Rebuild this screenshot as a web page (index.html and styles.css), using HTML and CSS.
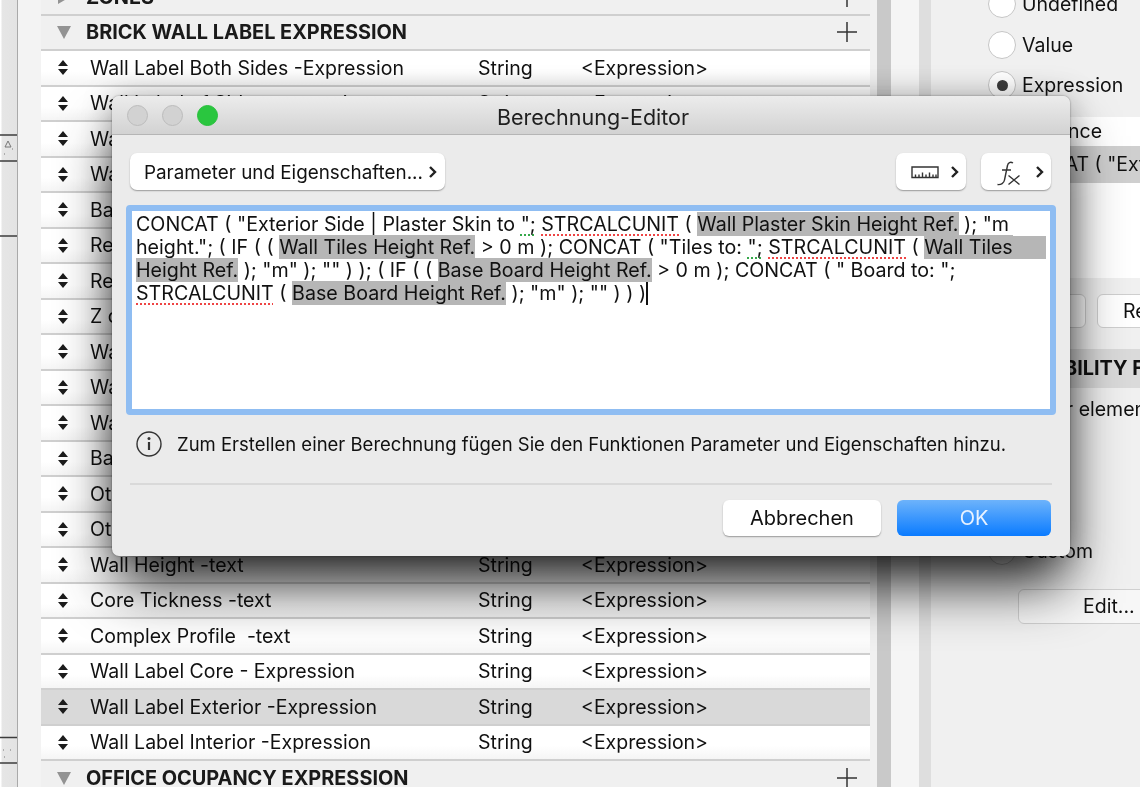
FILE: index.html
```html
<!DOCTYPE html>
<html lang="de">
<head>
<meta charset="utf-8">
<title>Berechnung-Editor</title>
<link rel="stylesheet" href="styles.css">
</head>
<body>
<div class="app">
  <div class="strip">
    <svg class="strip-marks" width="17" height="787" viewBox="0 0 17 787">
      <path d="M0 135H17M0 161H17M0 236H17M0 737.500H17M0 763H17" stroke="#3c3c3c" stroke-width="1.300" fill="none"/>
      <path d="M5 147l3-6 3 6z" stroke="#777" fill="none"/>
      <path d="M4 154h1M12 149h1M3 750h1M10 750h1M4 757h1" stroke="#777" fill="none"/>
    </svg>
  </div>
  <div class="gutter"></div>
  <div class="list">
    <div class="section"><svg class="tri" width="16" height="16" viewBox="0 0 16 16"><path d="M2 1l12 7-12 7z"/></svg><b>ZONES</b><svg class="plus" width="20" height="20" viewBox="0 0 20 20"><path d="M10 0V20M0 10H20"/></svg></div>
    <div class="section"><svg class="tri" width="16" height="16" viewBox="0 0 16 16"><path d="M1 2h14l-7 13z"/></svg><b>BRICK WALL LABEL EXPRESSION</b><svg class="plus" width="20" height="20" viewBox="0 0 20 20"><path d="M10 0V20M0 10H20"/></svg></div>
    <div class="row"><svg class="sort" width="12" height="15" viewBox="0 0 12 15"><path d="M6 0l5 6H1zM6 15L1 9h10z"/></svg><span>Wall Label Both Sides -Expression</span><span>String</span><span>&lt;Expression&gt;</span></div>
    <div class="row"><svg class="sort" width="12" height="15" viewBox="0 0 12 15"><path d="M6 0l5 6H1zM6 15L1 9h10z"/></svg><span>Wall Label of Sides expression</span><span>String</span><span>&lt;Expression&gt;</span></div>
    <div class="row"><svg class="sort" width="12" height="15" viewBox="0 0 12 15"><path d="M6 0l5 6H1zM6 15L1 9h10z"/></svg><span>Wall Plaster Skin Height Ref.</span><span>String</span><span>&lt;Expression&gt;</span></div>
    <div class="row"><svg class="sort" width="12" height="15" viewBox="0 0 12 15"><path d="M6 0l5 6H1zM6 15L1 9h10z"/></svg><span>Wall Tiles Height Ref.</span><span>String</span><span>&lt;Expression&gt;</span></div>
    <div class="row"><svg class="sort" width="12" height="15" viewBox="0 0 12 15"><path d="M6 0l5 6H1zM6 15L1 9h10z"/></svg><span>Base Board Height Ref.</span><span>String</span><span>&lt;Expression&gt;</span></div>
    <div class="row"><svg class="sort" width="12" height="15" viewBox="0 0 12 15"><path d="M6 0l5 6H1zM6 15L1 9h10z"/></svg><span>Ref. Level</span><span>String</span><span>&lt;Expression&gt;</span></div>
    <div class="row"><svg class="sort" width="12" height="15" viewBox="0 0 12 15"><path d="M6 0l5 6H1zM6 15L1 9h10z"/></svg><span>Ref. Height</span><span>String</span><span>&lt;Expression&gt;</span></div>
    <div class="row"><svg class="sort" width="12" height="15" viewBox="0 0 12 15"><path d="M6 0l5 6H1zM6 15L1 9h10z"/></svg><span>Z coordinate</span><span>String</span><span>&lt;Expression&gt;</span></div>
    <div class="row"><svg class="sort" width="12" height="15" viewBox="0 0 12 15"><path d="M6 0l5 6H1zM6 15L1 9h10z"/></svg><span>Wall Finish</span><span>String</span><span>&lt;Expression&gt;</span></div>
    <div class="row"><svg class="sort" width="12" height="15" viewBox="0 0 12 15"><path d="M6 0l5 6H1zM6 15L1 9h10z"/></svg><span>Wall Type</span><span>String</span><span>&lt;Expression&gt;</span></div>
    <div class="row"><svg class="sort" width="12" height="15" viewBox="0 0 12 15"><path d="M6 0l5 6H1zM6 15L1 9h10z"/></svg><span>Wall Length</span><span>String</span><span>&lt;Expression&gt;</span></div>
    <div class="row"><svg class="sort" width="12" height="15" viewBox="0 0 12 15"><path d="M6 0l5 6H1zM6 15L1 9h10z"/></svg><span>Base Board</span><span>String</span><span>&lt;Expression&gt;</span></div>
    <div class="row"><svg class="sort" width="12" height="15" viewBox="0 0 12 15"><path d="M6 0l5 6H1zM6 15L1 9h10z"/></svg><span>Other Side 1</span><span>String</span><span>&lt;Expression&gt;</span></div>
    <div class="row"><svg class="sort" width="12" height="15" viewBox="0 0 12 15"><path d="M6 0l5 6H1zM6 15L1 9h10z"/></svg><span>Other Side 2</span><span>String</span><span>&lt;Expression&gt;</span></div>
    <div class="row"><svg class="sort" width="12" height="15" viewBox="0 0 12 15"><path d="M6 0l5 6H1zM6 15L1 9h10z"/></svg><span>Wall Height -text</span><span>String</span><span>&lt;Expression&gt;</span></div>
    <div class="row"><svg class="sort" width="12" height="15" viewBox="0 0 12 15"><path d="M6 0l5 6H1zM6 15L1 9h10z"/></svg><span>Core Tickness -text</span><span>String</span><span>&lt;Expression&gt;</span></div>
    <div class="row"><svg class="sort" width="12" height="15" viewBox="0 0 12 15"><path d="M6 0l5 6H1zM6 15L1 9h10z"/></svg><span>Complex Profile&nbsp; -text</span><span>String</span><span>&lt;Expression&gt;</span></div>
    <div class="row"><svg class="sort" width="12" height="15" viewBox="0 0 12 15"><path d="M6 0l5 6H1zM6 15L1 9h10z"/></svg><span>Wall Label Core - Expression</span><span>String</span><span>&lt;Expression&gt;</span></div>
    <div class="row selected"><svg class="sort" width="12" height="15" viewBox="0 0 12 15"><path d="M6 0l5 6H1zM6 15L1 9h10z"/></svg><span>Wall Label Exterior -Expression</span><span>String</span><span>&lt;Expression&gt;</span></div>
    <div class="row"><svg class="sort" width="12" height="15" viewBox="0 0 12 15"><path d="M6 0l5 6H1zM6 15L1 9h10z"/></svg><span>Wall Label Interior -Expression</span><span>String</span><span>&lt;Expression&gt;</span></div>
    <div class="section"><svg class="tri" width="16" height="16" viewBox="0 0 16 16"><path d="M1 2h14l-7 13z"/></svg><b>OFFICE OCUPANCY EXPRESSION</b><svg class="plus" width="20" height="20" viewBox="0 0 20 20"><path d="M10 0V20M0 10H20"/></svg></div>
  </div>
  <div class="scroll-a"></div>
  <div class="scroll-b"></div>
  <div class="scroll-c"></div>
  <div class="scroll-d"></div>
  <div class="side">
    <div class="radio-row"><i class="radio"></i>Undefined</div>
    <div class="radio-row"><i class="radio"></i>Value</div>
    <div class="radio-row"><i class="radio on"></i>Expression</div>
    <div class="ref-label">Reference</div>
    <div class="ref-value">CONCAT ( "Exterior Side</div>
    <div class="ref-blank"></div>
    <div class="side-btns"><span class="side-btn first">Add</span><span class="side-btn">Remove</span></div>
    <div class="side-head">VISIBILITY FILTER</div>
    <div class="side-text">Filter elements</div>
    <div class="radio-row custom"><i class="radio"></i>Custom</div>
    <div class="edit-btn">Edit...</div>
  </div>
  <div class="dialog">
    <div class="titlebar">
      <div class="lights"><i class="light"></i><i class="light"></i><i class="light green"></i></div>
      <div class="title">Berechnung-Editor</div>
    </div>
    <div class="toolbar">
      <div class="tool tool-wide">Parameter und Eigenschaften...<svg class="chev" width="9" height="14" viewBox="0 0 9 14"><path d="M2 2l5 5-5 5"/></svg></div>
      <div class="tool-group">
        <div class="tool tool-icon"><svg width="28" height="14" viewBox="0 0 28 14"><path class="thin" d="M1 2h26v10.500H1zM4.500 12.500v-3M8 12.500v-3M11.500 12.500v-5M15 12.500v-3M18.500 12.500v-5M22 12.500v-3M25 12.500v-3"/></svg><svg class="chev" width="9" height="14" viewBox="0 0 9 14"><path d="M2 2l5 5-5 5"/></svg></div>
        <div class="tool tool-icon"><svg width="26" height="28" viewBox="0 0 26 28"><path class="thin" d="M17 5c-2.500-1.500-5-.5-5.500 2.500L8.500 22c-.5 3-3.500 5-7 4.500M6 12h9M12.500 17.500l11 9M23.500 17.500l-11 9"/></svg><svg class="chev" width="9" height="14" viewBox="0 0 9 14"><path d="M2 2l5 5-5 5"/></svg></div>
      </div>
    </div>
    <div class="editor">
      <div class="line">CONCAT ( "Exterior Side | Plaster Skin to <span class="ok">";</span> <span class="err">STRCALCUNIT</span> ( <mark>Wall Plaster Skin Height Ref.</mark> ); "m</div>
      <div class="line line-fill"><span>height."; ( IF ( ( <mark>Wall Tiles Height Ref.</mark> &gt; 0 m ); CONCAT ( "Tiles to: <span class="ok">";</span> <span class="err">STRCALCUNIT</span> ( <mark>Wall Tiles</mark></span><mark class="fill"></mark></div>
      <div class="line"><mark>Height Ref.</mark> ); "m" ); "" ) ); ( IF ( ( <mark>Base Board Height Ref.</mark> &gt; 0 m ); CONCAT ( " Board to: ";</div>
      <div class="line"><span class="err">STRCALCUNIT</span> ( <mark>Base Board Height Ref.</mark> ); "m" ); "" ) ) )<i class="caret"></i></div>
    </div>
    <div class="info">
      <svg width="26" height="26" viewBox="0 0 26 26"><circle class="thin" cx="13" cy="13" r="12"/><path d="M13 11v8" class="thick"/><circle cx="13" cy="7.500" r="1.500" fill="#333"/></svg>
      <span>Zum Erstellen einer Berechnung fügen Sie den Funktionen Parameter und Eigenschaften hinzu.</span>
    </div>
    <div class="sep"></div>
    <div class="actions">
      <div class="btn cancel">Abbrechen</div>
      <div class="btn ok-btn">OK</div>
    </div>
  </div>
</div>
</body>
</html>
```

FILE: styles.css
```css
* { box-sizing: border-box; }
html, body { margin: 0; height: 100%; overflow: hidden; }
body { font-family: Inter, "Noto Sans", sans-serif; color: #111; font-size: 19.500px; }

.app { position: relative; display: flex; width: 1140px; height: 787px; overflow: hidden; background: #f1f1f1; filter: blur(.35px); }

.strip { flex: none; width: 18px; background: linear-gradient(90deg, #fff 0, #fff 1px, #e6e6e6 2px, #e3e3e3 16px); border-right: 1px solid #a9a9a9; }
.strip-marks { display: block; }
.gutter { flex: none; width: 23px; background: #f3f3f3; }

.list { flex: none; width: 829px; margin-top: -20px; height: 850px; }
.section { display: flex; align-items: center; height: 35.500px; background: #f0f0f0; border-bottom: 2px solid #cfcfcf; padding: 0 13px 0 15px; }
.section b { flex: 1; margin-left: 14px; font-size: 19.900px; font-weight: 700; color: #1a1a1a; white-space: nowrap; }
.tri path { fill: #939393; }
.plus path { fill: none; stroke: #333; stroke-width: 1.500; }

.row { display: grid; grid-template-columns: 49px 388px 103px 1fr; align-items: center; height: 35.500px; background: linear-gradient(#fff 60%, #f5f5f5); border-bottom: 2px solid #cfcfcf; white-space: nowrap; }
.row.selected { background: #d9d9d9; }
.sort { justify-self: start; margin-left: 16px; }
.sort path { fill: #1c1c1c; }

.scroll-a { flex: none; width: 7px; background: #f1f1f1; }
.scroll-b { flex: none; width: 14px; background: #c9c9c9; }
.scroll-c { flex: none; width: 28px; background: #f5f5f5; }
.scroll-d { flex: none; width: 12px; background: #dedede; }

.side { flex: none; width: 209px; margin-top: -16px; background: #f0f0f0; }
.radio-row { display: flex; align-items: center; gap: 6px; height: 40.500px; padding-left: 57px; white-space: nowrap; }
.radio { flex: none; display: flex; align-items: center; justify-content: center; width: 28px; height: 28px; border-radius: 50%; background: #fff; border: 1.500px solid #c6c6c6; }
.radio.on::before { content: ""; width: 11px; height: 11px; border-radius: 50%; background: #3d3d3d; }
.ref-label { height: 29px; margin-top: 11px; padding-left: 77px; background: #fff; line-height: 28px; white-space: nowrap; }
.ref-value { height: 37px; padding-left: 76px; background: #cfcfcf; line-height: 37px; white-space: nowrap; overflow: hidden; }
.ref-blank { height: 95px; background: #fff; }
.side-btns { display: flex; gap: 11px; height: 34px; margin-top: 16px; padding-left: 70px; white-space: nowrap; }
.side-btn { flex: none; width: 100px; padding-left: 25px; line-height: 32px; background: #fff; border: 1px solid #cfcfcf; border-radius: 6px; }
.side-btn.first { width: 85px; }
.side-head { height: 39px; margin-top: 21px; padding-left: 94px; background: #dadada; line-height: 39px; font-size: 19.900px; font-weight: 700; white-space: nowrap; }
.side-text { margin-top: 9px; padding-left: 96px; line-height: 24px; white-space: nowrap; }
.custom { margin-top: 110px; }
.edit-btn { width: 140px; height: 35px; margin-top: 18px; margin-left: 87px; padding-left: 64px; line-height: 33px; background: #f7f7f7; border: 1px solid #d0d0d0; border-radius: 6px; }

.dialog { position: absolute; left: 112px; top: 96px; width: 958px; height: 460px; background: #ebebeb; border-radius: 7px; box-shadow: 0 34px 56px -6px rgba(0, 0, 0, .85), 0 0 30px rgba(0, 0, 0, .25), 0 0 2px rgba(0, 0, 0, .45); }
.titlebar { display: flex; align-items: center; justify-content: center; position: relative; height: 39px; padding: 3px 0 0 4px; background: linear-gradient(#ececec, #d2d2d2); border-bottom: 1px solid #b5b5b5; border-radius: 7px 7px 0 0; }
.lights { position: absolute; left: 15px; top: 9px; display: flex; gap: 14px; }
.light { width: 21px; height: 21px; border-radius: 50%; background: #d2d2d2; border: 1px solid #bcbcbc; }
.light.green { background: #2ac63f; border-color: #27c03b; }
.title { font-size: 21.500px; color: #1f1f1f; }

.toolbar { display: flex; justify-content: space-between; margin-top: 18px; padding: 0 19px 0 18px; }
.tool-group { display: flex; gap: 15px; }
.tool { display: flex; align-items: center; height: 37px; padding-top: 1px; background: #fff; border-radius: 7px; box-shadow: 0 1px 1.500px rgba(0, 0, 0, .35); white-space: nowrap; font-size: 18.850px; }
.tool-wide { width: 315px; padding-left: 14px; gap: 5px; }
.tool-icon { width: 70px; justify-content: space-between; padding: 0 7px 0 15px; }
.chev path { fill: none; stroke: #222; stroke-width: 2.400; }
.thin { fill: none; stroke: #333; stroke-width: 1.400; }
.thick { fill: none; stroke: #333; stroke-width: 2.200; }

.editor { height: 210px; margin: 15px 14px 0; padding: 2px 4px 0 4px; background: #fff; border: 6px solid #8fbdf2; border-radius: 4px; font-size: 19.670px; }
.line { height: 23px; line-height: 23px; white-space: pre; }
.line-fill { display: flex; }
mark { background: #b6b6b6; color: inherit; }
mark.fill { flex: 1; }
.err { text-decoration: underline dotted #ee4444 2px; text-underline-offset: 3px; }
.ok { text-decoration: underline dotted #35a84a 2px; text-underline-offset: 3px; }
.caret { display: inline-block; width: 1.500px; height: 23px; background: #111; vertical-align: top; }

.info { display: flex; align-items: center; gap: 15px; height: 26px; margin-top: 16px; padding-left: 24px; font-size: 18.500px; white-space: nowrap; }
.info svg { flex: none; }
.sep { height: 1.500px; margin: 26px 18px 0; background: #d9d9d9; }
.actions { display: flex; justify-content: flex-end; gap: 16px; margin-top: 15px; padding-right: 19px; }
.btn { display: flex; align-items: center; justify-content: center; height: 36px; border-radius: 6px; font-size: 20px; }
.cancel { width: 158px; background: #fff; box-shadow: 0 1px 1.500px rgba(0, 0, 0, .35); }
.ok-btn { width: 154px; color: #e8f2ff; background: linear-gradient(#6db3fb, #0a7bff); }
```
